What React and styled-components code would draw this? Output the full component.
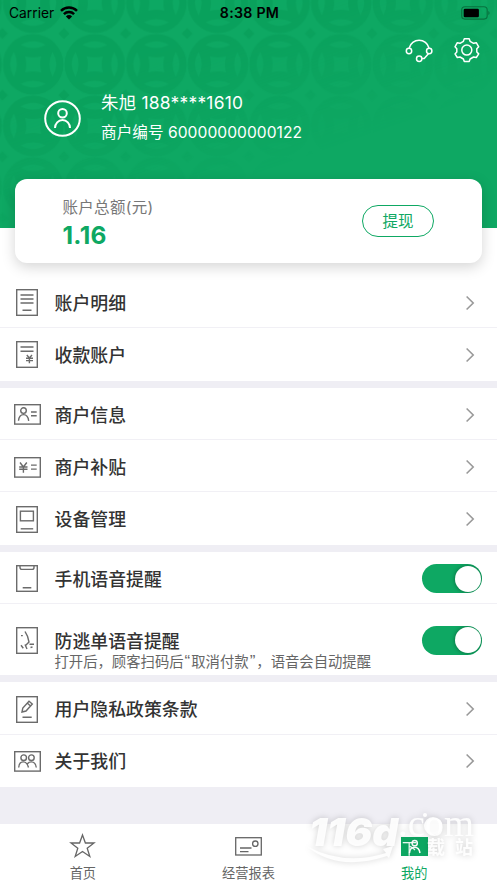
//lib
import styled, { createGlobalStyle } from 'styled-components'

const GREEN = '#0ea863'

const GlobalStyle = createGlobalStyle`
  * {
    box-sizing: border-box;
  }
  body {
    margin: 0;
    background: #efeef4;
    font-family: Inter, 'Noto Sans CJK SC', sans-serif;
    color: #333;
  }
  svg {
    display: block;
    flex: none;
  }
`

const Screen = styled.div`
  position: relative;
  display: flex;
  flex-direction: column;
  width: 497px;
  height: 883px;
  overflow: hidden;
  background: #efeef4;
`

const Header = styled.header`
  position: relative;
  height: 228px;
  flex: none;
  background: ${GREEN};
`

const Pattern = styled.svg`
  position: absolute;
  inset: 0;
`

const StatusBar = styled.div`
  position: relative;
  display: grid;
  grid-template-columns: 1fr auto 1fr;
  align-items: center;
  height: 25px;
  padding: 0 7px 0 9px;
  color: #000;
`

const Carrier = styled.div`
  display: flex;
  align-items: center;
  gap: 6px;
  font-size: 13.8px;
`

const Clock = styled.div`
  font-size: 14.2px;
  font-weight: 600;
  letter-spacing: 0.25px;
`

const Battery = styled.div`
  justify-self: end;
`

const Actions = styled.div`
  position: relative;
  display: flex;
  justify-content: flex-end;
  gap: 20.5px;
  padding: 11px 16px 0 0;
`

const Profile = styled.div`
  position: relative;
  display: flex;
  align-items: center;
  gap: 20px;
  padding: 24.5px 0 0 44px;
  color: #fff;
`

const Name = styled.div`
  font-size: 17.4px;
  line-height: 28px;
  letter-spacing: 0.25px;
  white-space: pre;
`

const MerchantNo = styled(Name)`
  font-size: 15.6px;
  line-height: 32px;
  letter-spacing: 0.05px;
`

const Card = styled.section`
  position: relative;
  display: flex;
  justify-content: space-between;
  align-items: center;
  flex: none;
  height: 84px;
  margin: -49px 15px 0 14.5px;
  padding: 0 48px;
  border-radius: 12px;
  background: #fff;
  box-shadow: 0 4px 14px rgba(0, 0, 0, 0.17);
`

const BalanceLabel = styled.div`
  margin-top: 5px;
  font-size: 15.5px;
  line-height: 22px;
  letter-spacing: 0.3px;
  color: #777;
`

const Balance = styled.div`
  font-size: 24.5px;
  font-weight: 700;
  line-height: 32px;
  letter-spacing: 0.3px;
  color: ${GREEN};
`

const Withdraw = styled.button`
  width: 72px;
  height: 32px;
  padding: 1px 0 0;
  border: 1.5px solid ${GREEN};
  border-radius: 16px;
  background: #fff;
  color: ${GREEN};
  font-family: inherit;
  font-size: 15.5px;
  line-height: 28px;
`

// white area behind the header and the floating card
const Top = styled.div`
  display: flex;
  flex-direction: column;
  flex: none;
  padding-bottom: 13px;
  background: #fff;
`

const Group = styled.div`
  flex: none;
  margin-bottom: 7.3px;
  background: #fff;
`

const IconBox = styled.div`
  display: flex;
  justify-content: center;
  width: 30px;
  margin-right: 12.5px;
`

const RowText = styled.div`
  flex: 1;
  padding-top: 2px;
`

const Row = styled.div`
  display: flex;
  align-items: center;
  height: 52.3px;
  padding: ${(p) => (p.$line ? '2.5px' : '1px')} 15px 0 12px;
  border-bottom: ${(p) => (p.$line ? '1.5px solid #f1f0f5' : 'none')};
`

const NoteRow = styled(Row)`
  align-items: flex-start;
  height: 70.8px;
  padding-top: 21.5px;

  ${RowText} {
    padding-top: 4px;
  }
  ${IconBox} {
    padding-top: 1.5px;
  }
`

const RowTitle = styled.div`
  font-size: 17.9px;
  font-weight: 500;
  line-height: 24px;
`

const RowNote = styled.div`
  margin-top: -2px;
  font-size: 14.35px;
  line-height: 20px;
  color: #666;
  white-space: nowrap;
`

const Quote = styled.span`
  padding: 0 1px;
  font-family: 'Liberation Sans', sans-serif;
  font-size: 17px;
  line-height: 1;
`

const Switch = styled.div`
  display: flex;
  justify-content: flex-end;
  width: 60px;
  height: 29px;
  padding: 1.5px;
  border-radius: 15px;
  background: ${GREEN};
  overflow: hidden;
`

const Knob = styled.div`
  width: 26px;
  height: 26px;
  border-radius: 50%;
  background: #fff;
  box-shadow: 0 0 4px rgba(0, 0, 0, 0.4);
`

const TabBar = styled.nav`
  display: grid;
  grid-template-columns: repeat(3, 1fr);
  height: 59px;
  margin-top: auto;
  background: #fff;
`

const Tab = styled.div`
  display: flex;
  flex-direction: column;
  align-items: center;
  padding-top: 7px;
  font-size: 13.2px;
  line-height: 20px;
  color: ${(p) => (p.$active ? GREEN : '#666')};
`

const TabIcon = styled.div`
  display: flex;
  align-items: center;
  height: 30px;
  margin-bottom: 2px;
`

const Watermark = styled.svg`
  position: absolute;
  right: 0;
  bottom: 0;
  filter: drop-shadow(0 0 3px rgba(0, 0, 0, 0.2));
`

const Coins = () => (
  <Pattern width="497" height="228">
    <defs>
      <pattern id="coin" x="2.4" y="33.6" width="61.6" height="61.6" patternUnits="userSpaceOnUse">
        <circle cx="30.8" cy="30.8" r="30.3" fill="#069a56" />
        <g fill={GREEN}>
          <path d="M11.5 18.5Q4 30.8 11.5 43.1Q17.5 30.8 11.5 18.5Z" />
          <path d="M50.1 18.5Q57.6 30.8 50.1 43.1Q44.1 30.8 50.1 18.5Z" />
          <path d="M18.5 11.5Q30.8 4 43.1 11.5Q30.8 17.5 18.5 11.5Z" />
          <path d="M18.5 50.1Q30.8 57.6 43.1 50.1Q30.8 44.1 18.5 50.1Z" />
          <path d="M22.8 22.8Q30.8 25 38.8 22.8Q36.6 30.8 38.8 38.8Q30.8 36.6 22.8 38.8Q25 30.8 22.8 22.8Z" />
        </g>
        <g fill="#069a56">
          <path d="M0 -5.5L5.5 0L0 5.5L-5.5 0Z" />
          <path d="M61.6 -5.5L67 0L61.6 5.5L56 0Z" />
          <path d="M0 56L5.5 61.6L0 67L-5.5 61.6Z" />
          <path d="M61.6 56L67 61.6L61.6 67L56 61.6Z" />
        </g>
      </pattern>
      <linearGradient id="fade" gradientUnits="userSpaceOnUse" x1="0" y1="0" x2="82" y2="235">
        <stop offset="0" stopColor="#fff" stopOpacity="0.55" />
        <stop offset="0.45" stopColor="#fff" stopOpacity="0.5" />
        <stop offset="1" stopColor="#fff" stopOpacity="0" />
      </linearGradient>
      <mask id="coinMask">
        <rect width="497" height="228" fill="url(#fade)" />
      </mask>
    </defs>
    <rect width="497" height="228" fill="url(#coin)" mask="url(#coinMask)" />
  </Pattern>
)

const Wifi = () => (
  <svg width="18" height="14" viewBox="0 0 18 14" fill="none" stroke="#000" strokeWidth="2.5">
    <path d="M1 4.8A11.5 11.5 0 0 1 17 4.8" />
    <path d="M3.9 8.2A7.2 7.2 0 0 1 14.1 8.2" />
    <path d="M9 13.5L5.9 10.4A4.4 4.4 0 0 1 12.1 10.4Z" fill="#000" stroke="none" />
  </svg>
)

const BatteryIcon = () => (
  <svg width="29" height="14" viewBox="0 0 29 14">
    <rect x="0.7" y="0.7" width="25.5" height="12.4" rx="3.3" fill="none" stroke="#08713f" strokeWidth="1.1" />
    <rect x="2.7" y="2.7" width="15.2" height="8.6" rx="1.3" fill="#000" />
    <path d="M27.3 5V9Q28.6 8.3 28.6 7Q28.6 5.7 27.3 5Z" fill="#08713f" />
  </svg>
)

const Headset = () => (
  <svg width="28" height="28" viewBox="0 0 28 28" fill="none" stroke="#fff" strokeWidth="1.5">
    <path d="M4.2 12A10.2 10.2 0 0 1 24 12" />
    <circle cx="4" cy="15" r="2.7" />
    <circle cx="24.2" cy="15" r="2.7" />
    <circle cx="14.2" cy="22.8" r="2.7" />
    <path d="M23.6 17.6L19.2 22.6H17" />
  </svg>
)

const Gear = () => (
  <svg width="28" height="28" viewBox="0 0 28 28" fill="none" stroke="#fff" strokeWidth="1.5" strokeLinejoin="round">
    <path d="M11.3 2.8H16.2L17.1 5.3L20.6 7.3L23.3 6.7L25.7 10.8L23.8 12.7V16L25.7 17.9L23.3 21.5L20.6 21L17.1 23L16.2 25.5H11.3L10.4 23L7 21L4.3 21.5L2 17.9L3.8 16V12.7L2 10.8L4.3 6.7L7 7.3L10.4 5.3Z" />
    <circle cx="13.8" cy="14.1" r="5" />
  </svg>
)

const Avatar = () => (
  <svg width="37" height="37" viewBox="0 0 37 37" fill="none" stroke="#fff" strokeWidth="2">
    <circle cx="18.5" cy="18.5" r="17.3" />
    <circle cx="18.5" cy="13.3" r="4.3" />
    <path d="M11 28A7.5 8 0 0 1 26 28" />
  </svg>
)

const Portrait = ({ children }) => (
  <svg width="22" height="27" viewBox="0 0 22 27" fill="none" stroke="#6b6b6b" strokeWidth="1.4">
    <rect x="0.7" y="0.7" width="20.6" height="25.6" />
    {children}
  </svg>
)

const Landscape = ({ children }) => (
  <svg width="27" height="21" viewBox="0 0 27 21" fill="none" stroke="#6b6b6b" strokeWidth="1.4">
    <rect x="0.7" y="0.7" width="25.6" height="19.4" />
    {children}
  </svg>
)

const icons = {
  detail: (
    <Portrait>
      <path d="M4.5 6H17.5M4.5 10H17.5M4.5 14H17.5M6.5 21.2H15.5" />
    </Portrait>
  ),
  receive: (
    <Portrait>
      <path d="M4.5 6H17.5M4.5 10.2H17.5" />
      <path d="M10.8 14L13.4 17L16 14M10 17.3H17M10 19.6H17M13.4 17V22.3" />
    </Portrait>
  ),
  info: (
    <Landscape>
      <circle cx="9.5" cy="6.6" r="2.8" />
      <path d="M4.5 16.8Q5 10.6 9.5 10.6Q14 10.6 14.7 16.8M17 8H22.7M17 11.7H22.7" />
    </Landscape>
  ),
  subsidy: (
    <Landscape>
      <path d="M6 5.5L9.4 10L12.8 5.5M5.2 10H13.5M5.2 12.2H13.5M9.4 10V15.8M17 8.1H22.7M17 12.1H22.7" />
    </Landscape>
  ),
  device: (
    <Portrait>
      <rect x="4.4" y="5.2" width="13" height="9.6" />
      <path d="M4.7 22.8H17.2" />
    </Portrait>
  ),
  phone: (
    <Portrait>
      <path d="M4 1V2.5Q4 4.4 6 4.4H16Q18 4.4 18 2.5V1M6.7 22.8H15.3" />
    </Portrait>
  ),
  escape: (
    <Portrait>
      <path d="M9 4.5L11.6 9.5L13 15L9.5 18.5M5 8.6H6.8M5 18.3L7.3 21.3M9 17.5L11 22M13.5 17.3H18M14.5 20.5L16.5 20" />
    </Portrait>
  ),
  policy: (
    <Portrait>
      <path d="M6 16L6.8 12L13 5.2L16.3 8L10 15ZM11.3 7L14.5 9.9M6.5 21.3H15.7" />
    </Portrait>
  ),
  about: (
    <Landscape>
      <circle cx="9.7" cy="6.7" r="2.8" />
      <circle cx="17.4" cy="6.7" r="2.8" />
      <path d="M4.7 16.5Q5 10.9 9.4 10.9Q13 10.9 14.5 16.5M13.3 12.8Q15 10.9 17.4 10.9Q21.5 10.9 22.3 16.5" />
    </Landscape>
  ),
}

const Chevron = () => (
  <svg width="16" height="16" viewBox="0 0 16 16" fill="none" stroke="#999" strokeWidth="1.6">
    <path d="M0.6 1.5L7.2 8L0.6 14.5" />
  </svg>
)

const Toggle = () => (
  <Switch>
    <Knob />
  </Switch>
)

const MenuRow = ({ icon, title, toggle, line }) => (
  <Row $line={line}>
    <IconBox>{icons[icon]}</IconBox>
    <RowText>
      <RowTitle>{title}</RowTitle>
    </RowText>
    {toggle ? <Toggle /> : <Chevron />}
  </Row>
)

export default function App() {
  return (
    <>
      <GlobalStyle />
      <Screen>
        <Top>
          <Header>
            <Coins />
            <StatusBar>
              <Carrier>
                Carrier
                <Wifi />
              </Carrier>
              <Clock>8:38 PM</Clock>
              <Battery>
                <BatteryIcon />
              </Battery>
            </StatusBar>
            <Actions>
              <Headset />
              <Gear />
            </Actions>
            <Profile>
              <Avatar />
              <div>
                <Name>朱旭 188****1610</Name>
                <MerchantNo>商户编号 60000000000122</MerchantNo>
              </div>
            </Profile>
          </Header>
          <Card>
            <div>
              <BalanceLabel>账户总额(元)</BalanceLabel>
              <Balance>1.16</Balance>
            </div>
            <Withdraw>提现</Withdraw>
          </Card>
        </Top>
        <Group>
          <MenuRow icon="detail" title="账户明细" line />
          <MenuRow icon="receive" title="收款账户" />
        </Group>
        <Group>
          <MenuRow icon="info" title="商户信息" line />
          <MenuRow icon="subsidy" title="商户补贴" line />
          <MenuRow icon="device" title="设备管理" />
        </Group>
        <Group>
          <MenuRow icon="phone" title="手机语音提醒" toggle line />
          <NoteRow>
            <IconBox>{icons.escape}</IconBox>
            <RowText>
              <RowTitle>防逃单语音提醒</RowTitle>
              <RowNote>
                打开后，顾客扫码后<Quote>“</Quote>取消付款<Quote>”</Quote>，语音会自动提醒
              </RowNote>
            </RowText>
            <Toggle />
          </NoteRow>
        </Group>
        <Group>
          <MenuRow icon="policy" title="用户隐私政策条款" line />
          <MenuRow icon="about" title="关于我们" />
        </Group>
        <TabBar>
          <Tab>
            <TabIcon>
              <svg width="27" height="26" viewBox="0 0 27 26" fill="none" stroke="#666" strokeWidth="1.3">
                <path d="M13.5 2L16.4 10H25L18.2 15.2L20.8 23.5L13.5 18.5L6.2 23.5L8.8 15.2L2 10H10.6Z" />
              </svg>
            </TabIcon>
            首页
          </Tab>
          <Tab>
            <TabIcon>
              <svg width="27" height="19" viewBox="0 0 27 19" fill="none" stroke="#666" strokeWidth="1.3">
                <rect x="0.7" y="0.7" width="25.6" height="17.3" />
                <circle cx="20.3" cy="6.7" r="2.7" />
                <path d="M5 11H16.5M5 14.6H13.5" />
              </svg>
            </TabIcon>
            经营报表
          </Tab>
          <Tab $active>
            <TabIcon>
              <svg width="27" height="19" viewBox="0 0 27 19" fill="none" stroke="#fff" strokeWidth="1.5">
                <rect width="27" height="19" fill={GREEN} stroke="none" />
                <circle cx="13.7" cy="6.2" r="2.6" />
                <path d="M8.5 16Q9 10.3 13.5 10.3Q18 10.3 19 16" />
              </svg>
            </TabIcon>
            我的
          </Tab>
        </TabBar>
        <Watermark width="207" height="83" viewBox="290 800 207 83" fill="#fff" fillOpacity="0.9">
          <text x="309" y="846" fontFamily="Inter" fontSize="39" fontWeight="900" fontStyle="italic" textLength="89" lengthAdjust="spacingAndGlyphs">
            116d
          </text>
          <text x="398" y="836" fontFamily="Liberation Serif" fontSize="38" fontWeight="400" textLength="76" lengthAdjust="spacingAndGlyphs">
            .com
          </text>
          <path d="M308 847Q345 866 386 853L383 849L393 846L389 858L387 856Q338 872 308 847Z" />
          <circle cx="433" cy="826" r="9" />
          <circle cx="425" cy="815" r="2" />
          <text x="402" y="854" fontFamily="Noto Sans CJK SC" fontSize="15" fontWeight="400">
            下
          </text>
          <text x="427" y="854" fontFamily="Noto Sans CJK SC" fontSize="18" fontWeight="700">
            载
          </text>
          <text x="455" y="854" fontFamily="Noto Sans CJK SC" fontSize="18" fontWeight="700">
            站
          </text>
        </Watermark>
      </Screen>
    </>
  )
}
